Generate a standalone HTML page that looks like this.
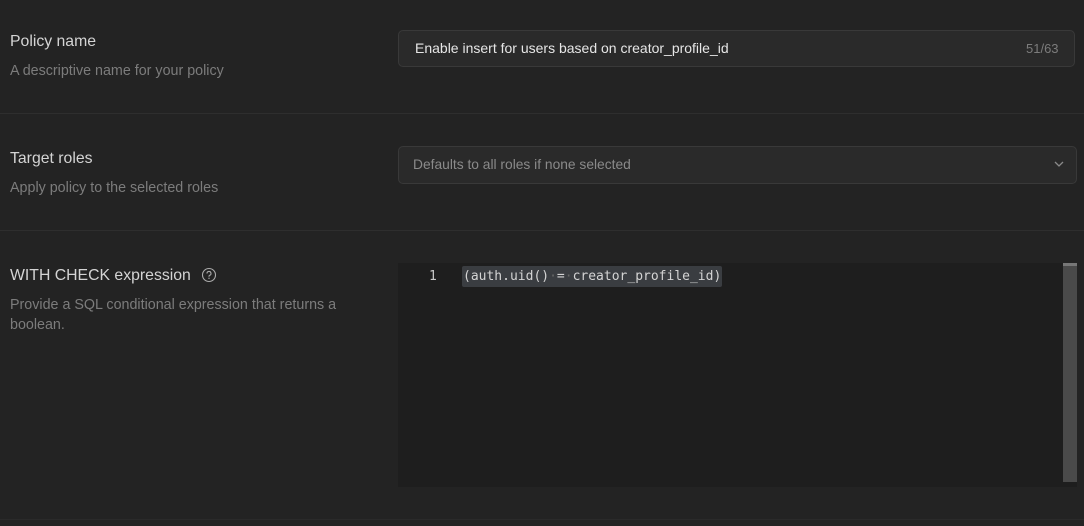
<!DOCTYPE html>
<html><head><style>
body{margin:0;width:1084px;height:526px;background:#232323;font-family:"Liberation Sans",sans-serif;position:relative;overflow:hidden}
.a{position:absolute}
.t{color:#d4d4d4;font-size:15.8px;left:10px}
.d{color:#7c7c7c;font-size:14.3px;left:10px;line-height:20px}
.hr{left:0;width:1084px;height:1px;background:#2e2e2e}
.inp{left:398px;width:677px;background:#2a2a2a;border:1px solid #393939;border-radius:5px;box-sizing:border-box}
</style></head><body>
<div class="a t" style="top:33px">Policy name</div>
<div class="a d" style="top:61px">A descriptive name for your policy</div>
<div class="a inp" style="top:30px;height:37px"></div>
<div class="a" style="left:415px;top:40px;color:#e6e6e6;font-size:14px">Enable insert for users based on creator_profile_id</div>
<div class="a" style="left:1026px;top:41px;color:#7c7c7c;font-size:13px">51/63</div>
<div class="a hr" style="top:113px"></div>
<div class="a t" style="top:150px">Target roles</div>
<div class="a d" style="top:178px">Apply policy to the selected roles</div>
<div class="a inp" style="top:146px;height:38px;width:679px"></div>
<div class="a" style="left:413px;top:157px;color:#8a8a8a;font-size:13.8px">Defaults to all roles if none selected</div>
<svg class="a" style="left:1054px;top:160px" width="10" height="8"><path d="M1 2l4 4 4-4" stroke="#8a8a8a" stroke-width="1.3" fill="none"/></svg>
<div class="a hr" style="top:230px"></div>
<div class="a t" style="top:267px">WITH CHECK expression</div>
<svg class="a" style="left:201px;top:267px" width="16" height="16"><circle cx="8" cy="8" r="6.5" stroke="#aaa" stroke-width="1.1" fill="none"/><path d="M6 6.5a2 2 0 1 1 2.5 1.9c-.4.2-.5.5-.5 1v.4" stroke="#aaa" stroke-width="1.1" fill="none"/><circle cx="8" cy="11.3" r=".7" fill="#aaa"/></svg>
<div class="a d" style="top:295px;width:340px">Provide a SQL conditional expression that returns a boolean.</div>
<div class="a" style="left:398px;top:263px;width:679px;height:224px;background:#1e1e1e"></div>
<div class="a" style="left:1063px;top:263px;width:14px;height:219px;background:#4a4a4a;border-top:3px solid #777;box-sizing:border-box"></div>
<div class="a" style="left:429px;top:269px;color:#c8c8c8;font-family:'DejaVu Sans Mono',monospace;font-size:13px">1</div>
<div class="a" style="left:462px;top:266px;height:21px;line-height:21px;padding:0 1px;background:#3a3d41;border-radius:2px;color:#d4d4d4;font-family:'DejaVu Sans Mono',monospace;font-size:13px">(auth.uid()<span style="color:#666">·</span>=<span style="color:#666">·</span>creator_profile_id)</div>
<div class="a hr" style="top:519px;background:#2a2a2a"></div>
</body></html>
